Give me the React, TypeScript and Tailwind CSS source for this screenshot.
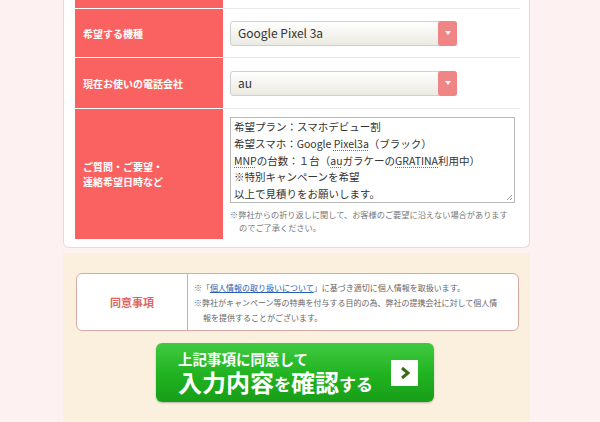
import React from 'react';

const FONT = { fontFamily: '"Noto Sans CJK JP", "Noto Sans", sans-serif' };

function SelectBox({ value }: { value: string }) {
  return (
    <div className="relative flex h-[25px] w-[227px] items-center rounded-[3px] border border-[#cfcfcf] bg-gradient-to-b from-white to-[#ebeae2] pl-[7px] text-[12px] text-[#333]">
      {value}
      <div className="absolute right-[-1px] top-[-1px] flex h-[25px] w-[19px] items-center justify-center rounded-[3px] bg-[#f08585]">
        <div className="h-0 w-0 border-x-[3px] border-t-[4px] border-x-transparent border-t-white" />
      </div>
    </div>
  );
}

function Squiggle({ children }: { children: React.ReactNode }) {
  return <span className="underline decoration-[#d44] decoration-dotted underline-offset-2">{children}</span>;
}

export default function App() {
  return (
    <div className="h-[422px] w-[600px] overflow-hidden bg-[#fdf1f1]" style={FONT}>
      <div className="ml-[63px] w-[467px]">
        {/* form panel */}
        <div className="rounded-b-[6px] border-x border-b border-[#ecdada] bg-white pb-[8px] pl-[11px] pr-[9px]">
          <div className="flex h-[9px]">
            <div className="w-[148px] border-b border-white bg-[#fa6262]" />
            <div className="flex-1 border-b border-[#e8e8e8]" />
          </div>
          <div className="flex h-[49px]">
            <div className="flex w-[148px] items-center border-b border-white bg-[#fa6262] pl-[8px] text-[10px] font-bold text-white">希望する機種</div>
            <div className="flex flex-1 items-center border-b border-[#e8e8e8] pl-[7px]">
              <SelectBox value="Google Pixel 3a" />
            </div>
          </div>
          <div className="flex h-[51px]">
            <div className="flex w-[148px] items-center border-b border-white bg-[#fa6262] pl-[8px] text-[10px] font-bold text-white">現在お使いの電話会社</div>
            <div className="flex flex-1 items-center border-b border-[#e8e8e8] pl-[7px]">
              <SelectBox value="au" />
            </div>
          </div>
          <div className="flex h-[130px]">
            <div className="flex w-[148px] items-center bg-[#fa6262] pl-[8px] text-[10px] font-bold leading-[15px] text-white">
              ご質問・ご要望・
              <br />
              連絡希望日時など
            </div>
            <div className="flex-1 pl-[7px] pt-[8px]">
              <div className="relative h-[86px] w-[285px] border border-[#b9b9b9] px-[3px] pt-[1px] text-[10.5px] leading-[16.8px] text-[#333]">
                <div>希望プラン：スマホデビュー割</div>
                <div>
                  希望スマホ：Google <Squiggle>Pixel3a</Squiggle>（ブラック）
                </div>
                <div>
                  <Squiggle>MNP</Squiggle>の台数：１台（<Squiggle>au</Squiggle>ガラケーの<Squiggle>GRATINA</Squiggle>利用中）
                </div>
                <div>※特別キャンペーンを希望</div>
                <div>以上で見積りをお願いします。</div>
                <svg className="absolute bottom-[1px] right-[1px]" width="7" height="7" viewBox="0 0 7 7">
                  <path d="M6 1 L1 6 M6 4 L4 6" stroke="#999" strokeWidth="1" />
                </svg>
              </div>
              <div className="mt-[5px] whitespace-nowrap text-[8.2px] leading-[13px] text-[#777]">
                ※弊社からの折り返しに関して、お客様のご要望に沿えない場合があります
                <div className="pl-[9px]">のでご了承ください。</div>
              </div>
            </div>
          </div>
        </div>

        {/* agreement area */}
        <div className="mt-[5px] h-[200px] bg-[#fbf0dd] px-[13px] pt-[20px]">
          <div className="flex h-[58px] w-[443px] overflow-hidden rounded-[6px] border border-[#d8aaa3] bg-white">
            <div className="flex w-[111px] items-center justify-center border-r border-[#d8aaa3] text-[11px] font-semibold text-[#dc6464]">同意事項</div>
            <div className="flex flex-1 flex-col justify-center whitespace-nowrap pl-[6px] text-[8px] leading-[15px] text-[#666]">
              <div>
                ※「<span className="text-[#2a5db0] underline">個人情報の取り扱いについて</span>」に基づき適切に個人情報を取扱います。
              </div>
              <div>※弊社がキャンペーン等の特典を付与する目的の為、弊社の提携会社に対して個人情</div>
              <div className="pl-[9px]">報を提供することがございます。</div>
            </div>
          </div>

          <div className="mt-[12px] flex justify-center pr-[3px]">
            <button className="relative flex h-[59px] w-[278px] items-center rounded-[6px] bg-gradient-to-b from-[#3fcb3f] via-[#22b422] to-[#179e17] pl-[22px] text-left text-white shadow-[0_1px_2px_rgba(0,0,0,0.25)]">
              <div className="flex flex-col font-bold">
                <span className="block text-[14.5px] leading-[15px]">上記事項に同意して</span>
                <span className="mt-[4px] flex items-end whitespace-nowrap">
                  <span className="inline-block text-[24px] leading-[24px]">入力内容</span>
                  <span className="inline-block pb-[1px] text-[17px] leading-[18px]">を</span>
                  <span className="inline-block text-[24px] leading-[24px]">確認</span>
                  <span className="inline-block pb-[1px] text-[17px] leading-[18px]">する</span>
                </span>
              </div>
              <div className="absolute left-[235px] top-[17px] flex h-[26px] w-[27px] items-center justify-center bg-white">
                <svg width="12" height="14" viewBox="0 0 12 14">
                  <path d="M3 2 L9 7 L3 12" fill="none" stroke="#3a6b1c" strokeWidth="3" />
                </svg>
              </div>
            </button>
          </div>
        </div>
      </div>
    </div>
  );
}
